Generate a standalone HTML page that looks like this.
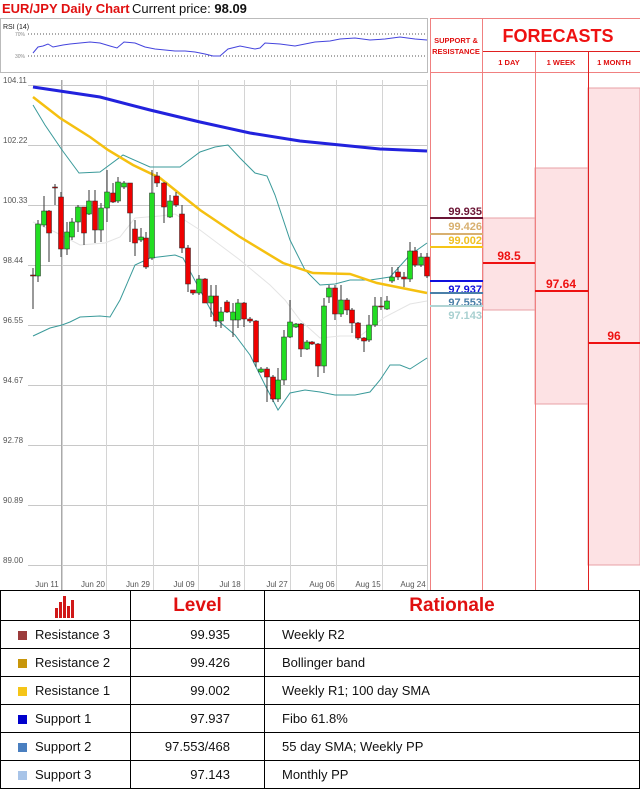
<!DOCTYPE html>
<html><head><meta charset="utf-8"><style>
body{margin:0;width:640px;height:788px;overflow:hidden;background:#fff;font-family:"Liberation Sans",sans-serif}
svg{position:absolute;left:0;top:0}
table{position:absolute;left:0;top:590px;width:640px;border-collapse:collapse;table-layout:fixed;font-family:"Liberation Sans",sans-serif}
tr{height:28px}
tr.h{height:30px}
td{border:1px solid #000;padding:0;font-size:13px;color:#111;line-height:14px}
th{border:1px solid #000;padding:0;color:#e01010;font-size:19px;font-weight:bold;line-height:20px}
.sq{display:inline-block;width:9px;height:9px;margin:0 8px 0 17px;vertical-align:-1px}
</style></head><body>
<svg width="640" height="590" id="s" font-family="Liberation Sans, sans-serif">
<text x="2" y="13" font-size="13" fill="#e01010" font-weight="bold">EUR/JPY Daily Chart</text>
<text x="132" y="13" font-size="13" fill="#111">Current price: <tspan font-weight="bold">98.09</tspan></text>
<rect x="0.5" y="18.5" width="427" height="54" fill="#fff" stroke="#bbb"/>
<text x="3" y="29" font-size="7" fill="#222">RSI (14)</text>
<text x="15" y="36" font-size="5" fill="#888">70%</text>
<text x="15" y="58" font-size="5" fill="#888">30%</text>
<line x1="28" y1="34" x2="427" y2="34" stroke="#555" stroke-dasharray="1,2"/>
<line x1="28" y1="56" x2="427" y2="56" stroke="#555" stroke-dasharray="1,2"/>
<polyline fill="none" stroke="#4444dd" stroke-width="1" points="33,53 38,47 43,46 48,44 53,47 58,46 63,45 70,44 80,43 90,42 100,43 110,46 117,48 124,42 135,43 145,47 155,49 165,50 175,51 185,51 195,52 205,54 213,56 220,56 228,49 240,46 255,49 260,48 265,43 280,44 295,46 305,44 315,42 330,41 340,39 355,38 370,40 385,39 400,37 415,39 427,40"/>
<g id="grid"></g>
<g id="cand"></g>
<rect x="588" y="88" width="52" height="477" fill="#fde2e4" stroke="#e8a0a6"/>
<rect x="535" y="168" width="53" height="236" fill="#fde2e4" stroke="#e8a0a6"/>
<rect x="483" y="218" width="52" height="92" fill="#fde2e4" stroke="#e8a0a6"/>
<g stroke="#f08080" fill="none">
<line x1="430.5" y1="18" x2="430.5" y2="590"/>
<line x1="482.5" y1="18" x2="482.5" y2="590"/>
<line x1="535.5" y1="51" x2="535.5" y2="590"/>
<line x1="430" y1="18.5" x2="640" y2="18.5"/>
<line x1="430" y1="72.5" x2="640" y2="72.5"/>
</g>
<line x1="483" y1="51.5" x2="640" y2="51.5" stroke="#e02020"/>
<line x1="588.5" y1="51" x2="588.5" y2="590" stroke="#e02020"/>
<text x="456" y="43" font-size="7.5" fill="#e01010" font-weight="bold" text-anchor="middle">SUPPORT &amp;</text>
<text x="456" y="54" font-size="7.5" fill="#e01010" font-weight="bold" text-anchor="middle">RESISTANCE</text>
<text x="558" y="42" font-size="18" fill="#ee1111" font-weight="bold" text-anchor="middle">FORECASTS</text>
<text x="509" y="65" font-size="7.5" fill="#e01010" font-weight="bold" text-anchor="middle">1 DAY</text>
<text x="561" y="65" font-size="7.5" fill="#e01010" font-weight="bold" text-anchor="middle">1 WEEK</text>
<text x="614" y="65" font-size="7.5" fill="#e01010" font-weight="bold" text-anchor="middle">1 MONTH</text>
<g font-size="11" font-weight="bold" text-anchor="end">
<line x1="430" y1="218" x2="483" y2="218" stroke="#6b1535" stroke-width="2"/><text x="482" y="215" fill="#6b1535">99.935</text>
<line x1="430" y1="234" x2="483" y2="234" stroke="#d8b070" stroke-width="2"/><text x="482" y="230" fill="#d8b070">99.426</text>
<line x1="430" y1="247" x2="483" y2="247" stroke="#f5c518" stroke-width="2"/><text x="482" y="244" fill="#f0c020">99.002</text>
<line x1="430" y1="281" x2="483" y2="281" stroke="#1010dd" stroke-width="2"/><text x="482" y="293" fill="#1010dd">97.937</text>
<line x1="430" y1="293" x2="483" y2="293" stroke="#4a7fa8" stroke-width="2"/><text x="482" y="306" fill="#4a7fa8">97.553</text>
<line x1="430" y1="306" x2="483" y2="306" stroke="#b0d4d4" stroke-width="2"/><text x="482" y="319" fill="#a8d0d0">97.143</text>
</g>
<g font-size="12" font-weight="bold" fill="#ee1111" text-anchor="middle">
<line x1="483" y1="263" x2="535" y2="263" stroke="#ee1111" stroke-width="2"/><text x="509" y="260">98.5</text>
<line x1="535" y1="291" x2="588" y2="291" stroke="#ee1111" stroke-width="2"/><text x="561" y="288">97.64</text>
<line x1="588" y1="343" x2="640" y2="343" stroke="#ee1111" stroke-width="2"/><text x="614" y="340">96</text>
</g>
</svg>
<table>
<colgroup><col style="width:130px"><col style="width:134px"><col></colgroup>
<tr class="h"><th><svg width="26" height="24" style="position:static;vertical-align:middle"><g fill="#d01818"><rect x="2" y="14" width="3" height="10"/><rect x="6" y="8" width="3" height="16"/><rect x="10" y="2" width="3" height="22"/><rect x="14" y="12" width="3" height="12"/><rect x="18" y="6" width="3" height="18"/></g></svg></th><th>Level</th><th>Rationale</th></tr>
<tr><td><span class="sq" style="background:#9b3b3b"></span>Resistance 3</td><td style="text-align:right;padding-right:34px">99.935</td><td style="padding-left:17px">Weekly R2</td></tr>
<tr><td><span class="sq" style="background:#c8960a"></span>Resistance 2</td><td style="text-align:right;padding-right:34px">99.426</td><td style="padding-left:17px">Bollinger band</td></tr>
<tr><td><span class="sq" style="background:#f5c518"></span>Resistance 1</td><td style="text-align:right;padding-right:34px">99.002</td><td style="padding-left:17px">Weekly R1; 100 day SMA</td></tr>
<tr><td><span class="sq" style="background:#0000cc"></span>Support 1</td><td style="text-align:right;padding-right:34px">97.937</td><td style="padding-left:17px">Fibo 61.8%</td></tr>
<tr><td><span class="sq" style="background:#4a7fc0"></span>Support 2</td><td style="text-align:right;padding-right:34px">97.553/468</td><td style="padding-left:17px">55 day SMA; Weekly PP</td></tr>
<tr><td><span class="sq" style="background:#a8c4e8"></span>Support 3</td><td style="text-align:right;padding-right:34px">97.143</td><td style="padding-left:17px">Monthly PP</td></tr>
</table>
<script>
var NS="http://www.w3.org/2000/svg";
function el(p,t,a,txt){var e=document.createElementNS(NS,t);for(var k in a)e.setAttribute(k,a[k]);if(txt)e.textContent=txt;p.appendChild(e);return e;}
var g=document.getElementById('grid');
var labs=["104.11","102.22","100.33","98.44","96.55","94.67","92.78","90.89","89.00"];
for(var i=0;i<9;i++){var y=85+i*60;el(g,'line',{x1:28,y1:y+.5,x2:427,y2:y+.5,stroke:'#c8c8c8'});el(g,'text',{x:3,y:y-2,'font-size':8,fill:'#555'},labs[i]);}
[62,106,153,198,244,290,336,382].forEach(function(x){el(g,'line',{x1:x+.5,y1:80,x2:x+.5,y2:590,stroke:'#d4d4d4'});});
el(g,'line',{x1:61.5,y1:80,x2:61.5,y2:590,stroke:'#aaa'});
el(g,'line',{x1:427.5,y1:80,x2:427.5,y2:590,stroke:'#ccc'});
var d=["Jun 11","Jun 20","Jun 29","Jul 09","Jul 18","Jul 27","Aug 06","Aug 15","Aug 24"],dx=[47,93,138,184,230,277,322,368,413];
for(i=0;i<9;i++)el(g,'text',{x:dx[i],y:587,'font-size':8,fill:'#555','text-anchor':'middle'},d[i]);
function pl(pts,c,w){el(g,'polyline',{points:pts,fill:'none',stroke:c,'stroke-width':w});}
pl("33,222 55,232 80,245 105,243 120,237 135,218 160,216 175,214 200,230 240,260 270,285 285,300 300,320 320,338 340,336 360,336 385,317 410,304 427,301","#e4e4e4",1);
pl("33,105 45,125 62,150 79,173 100,172 123,155 150,167 180,167 200,152 215,147 228,145 240,158 255,173 267,176 275,195 290,240 305,270 320,285 335,284 350,280 370,280 390,277 410,255 427,243","#3a9a9a",1);
pl("33,336 50,328 62,325 70,322 80,317 100,316 110,317 120,300 135,265 150,258 175,255 183,258 200,290 215,318 235,335 250,355 265,385 278,410 290,393 305,390 320,392 335,395 355,395 370,392 380,380 390,365 400,365 410,369 427,358","#3a9a9a",1);
pl("33,87 100,97 150,110 200,122 250,133 300,141 350,146 380,149 427,151","#2222dd",3);
pl("33,97 60,118 90,137 108,150 133,165 160,178 200,210 240,237 283,263 313,273 350,274 377,283 427,293","#f5c010",2.5);
var c=[[33,275,276,268,309,'r'],[38,224,276,220,282,'g'],[44,211,225,196,227,'g'],[49,211,233,210,262,'r'],[55,187,188,184,205,'r'],[61,197,249,192,257,'r'],[67,232,249,222,255,'g'],[72,222,237,218,240,'g'],[78,207,222,205,232,'g'],[84,207,233,212,245,'r'],[89,201,214,190,215,'g'],[95,201,230,190,243,'r'],[101,208,230,203,242,'g'],[107,192,208,170,222,'g'],[113,193,202,183,203,'r'],[118,182,201,177,203,'g'],[124,183,187,181,189,'g'],[130,183,213,183,242,'r'],[135,229,243,220,256,'r'],[141,237,240,228,242,'g'],[146,238,267,232,269,'r'],[152,193,258,170,260,'g'],[157,176,183,172,187,'r'],[164,183,207,182,223,'r'],[170,201,217,195,218,'g'],[176,196,205,192,207,'r'],[182,214,248,205,253,'r'],[188,248,284,245,292,'r'],[193,290,293,290,295,'r'],[199,279,293,275,295,'g'],[205,279,303,278,303,'r'],[211,296,303,285,317,'g'],[216,296,321,285,327,'r'],[221,312,321,307,328,'g'],[227,302,312,300,313,'r'],[233,312,320,303,337,'g'],[238,303,320,299,328,'g'],[244,303,319,302,327,'r'],[250,319,321,317,323,'r'],[256,321,362,320,367,'r'],[261,369,372,367,373,'g'],[267,369,377,367,402,'r'],[273,377,399,375,402,'r'],[278,380,399,368,402,'g'],[284,337,380,330,385,'g'],[290,322,337,300,338,'g'],[296,324,327,323,328,'g'],[301,324,349,323,357,'r'],[307,342,349,340,350,'g'],[312,342,344,341,345,'r'],[318,344,366,343,377,'r'],[324,306,366,298,373,'g'],[329,288,297,285,303,'g'],[335,288,314,285,320,'r'],[341,300,314,285,317,'g'],[347,300,310,298,315,'r'],[352,310,323,308,333,'r'],[358,323,338,322,340,'r'],[364,338,341,337,352,'r'],[369,325,340,315,342,'g'],[375,306,325,297,327,'g'],[381,306,307,297,310,'r'],[387,301,309,296,310,'g'],[392,277,281,267,283,'g'],[398,272,277,267,280,'r'],[404,277,279,272,287,'r'],[410,251,279,242,282,'g'],[415,251,265,247,267,'r'],[421,257,265,253,267,'g'],[427,257,276,253,278,'r']];
var cg=document.getElementById('cand');
c.forEach(function(k){el(cg,'line',{x1:k[0],y1:k[3],x2:k[0],y2:k[4],stroke:'#333','stroke-width':1});el(cg,'rect',{x:k[0]-2.5,y:k[1],width:5,height:Math.max(1,k[2]-k[1]),fill:k[5]=='r'?'#ee0000':'#22dd22',stroke:'#222','stroke-width':.5});});
</script>
</body></html>
